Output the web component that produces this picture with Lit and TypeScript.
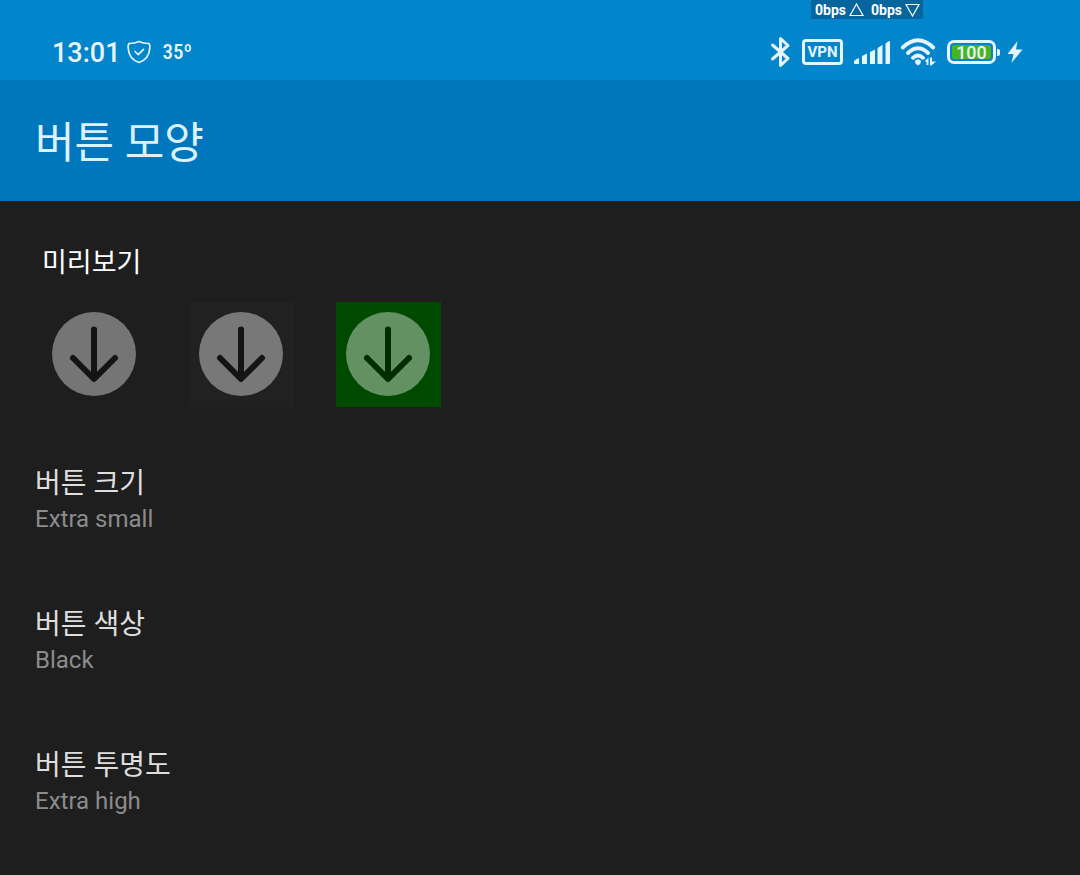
import { LitElement, html, css } from "lit";
import { customElement, property } from "lit/decorators.js";

const FONT = css`Roboto, "Noto Sans CJK KR", sans-serif`;

@customElement("status-bar")
class StatusBar extends LitElement {
  static styles = css`
    :host {
      display: block;
      height: 80px;
      background: #0285ca;
      color: #e6f4fd;
      font-family: ${FONT};
    }
    .speed {
      display: flex;
      align-items: center;
      gap: 3px;
      width: max-content;
      height: 19px;
      margin: 0 157px 0 auto;
      padding: 0 3px 0 4px;
      box-sizing: border-box;
      background: #05659c;
      color: #fff;
      font-size: 14px;
      line-height: 20px;
      font-weight: 700;
    }
    .down {
      margin-left: 4px;
    }
    .row {
      display: flex;
      justify-content: space-between;
      align-items: center;
      height: 48px;
      padding: 9px 56px 0 52px;
      box-sizing: content-box;
    }
    .group {
      display: flex;
      align-items: center;
    }
    .clock {
      font-size: 27px;
      font-weight: 500;
      line-height: 32px;
      padding-top: 2px;
    }
    .shield {
      margin: 0 12px 0 6px;
    }
    .temp {
      font-family: "Roboto Condensed", "Liberation Sans Narrow", Roboto, sans-serif;
      font-size: 21px;
      font-weight: 500;
      line-height: 32px;
    }
    .vpn {
      width: 41px;
      height: 26px;
      margin: 0 11px;
      box-sizing: border-box;
      border: 3px solid;
      border-radius: 4px;
      font-size: 15px;
      line-height: 21px;
      font-weight: 700;
      text-align: center;
    }
    .wifi {
      margin: 0 10px;
    }
    .battery {
      width: 49px;
      height: 24px;
      box-sizing: border-box;
      border: 3px solid;
      border-radius: 7px;
      padding: 2px;
      font-size: 18px;
      line-height: 15px;
      text-align: center;
      font-weight: 500;
    }
    .charge {
      height: 14px;
      background: #48b51f;
      border-radius: 2px;
    }
    .cap {
      width: 3px;
      height: 7px;
      margin: 0 6px 0 1px;
      border-radius: 0 2px 2px 0;
      background: currentColor;
    }
    svg {
      display: block;
      fill: none;
      stroke: currentColor;
    }
    .solid {
      fill: currentColor;
      stroke: none;
    }
  `;

  render() {
    return html`
      <div class="speed">
        <span>0bps</span>
        <svg width="15" height="14" viewBox="0 0 15 14" stroke-width="1.2"><path d="M7.5 1 14 12.500H1Z" /></svg>
        <span class="down">0bps</span>
        <svg width="15" height="14" viewBox="0 0 15 14" stroke-width="1.2"><path d="M7.5 13 14 1.500H1Z" /></svg>
      </div>
      <div class="row">
        <div class="group">
          <span class="clock">13:01</span>
          <svg class="shield" width="24" height="24" viewBox="0 0 24 24" stroke-width="1.7" stroke-linejoin="round" stroke-linecap="round">
            <path d="M12 1.5C9 3 5.500 3.500 2.200 3.500 1.300 4 1 5 1.200 8 1.500 15 5 20 12 22.500 19 20 22.500 15 22.800 8 23 5 22.700 4 21.800 3.500 18.500 3.500 15 3 12 1.500Z" />
            <path d="M8 11.500 11.300 14.700 16.500 9.300" />
          </svg>
          <span class="temp">35º</span>
        </div>
        <div class="group">
          <svg width="21" height="32" viewBox="0 0 21 32" stroke-width="3" stroke-linejoin="round" stroke-linecap="round">
            <path d="M2.500 9 18 22.500 10.500 29.500V2.500L18 9.500 2.500 23" />
          </svg>
          <div class="vpn">VPN</div>
          <svg class="solid" width="36" height="25" viewBox="0 0 36 25">
            <path d="M0 21.500Q0 20 5 18V24H1Q0 24 0 23ZM8 16 13 13.500V24H8ZM16 12 21 9.500V24H16ZM23.500 8 28.500 5V24H23.500ZM31.500 3.500 34.500 1.200Q36 0.500 36 2V23Q36 24 35 24H31.500Z" />
          </svg>
          <svg class="wifi" width="37" height="30" viewBox="0 0 37 30" stroke-width="3.8" stroke-linecap="round">
            <path d="M2.800 10.500Q18 -3.800 33.200 10.500M8 16Q18 6.500 28 16M13 20.800Q18 16.200 23 20.800" />
            <path class="solid" d="M14.800 24Q18 20.500 21.200 24 21 27 18 28.500 15 27 14.800 24ZM24.500 24.500 28.500 20.500V28H26.500V24.500ZM30 20.500H32V24.500H36L31.500 28.500H30Z" />
          </svg>
          <div class="battery"><div class="charge">100</div></div>
          <div class="cap"></div>
          <svg class="solid" width="18" height="24" viewBox="0 0 18 24">
            <path d="M11.500 1 1.500 14H7.500L5.500 23 16.500 9.500H10Z" />
          </svg>
        </div>
      </div>
    `;
  }
}

@customElement("button-preview")
class ButtonPreview extends LitElement {
  @property({ reflect: true }) tone = "plain";

  static styles = css`
    :host {
      display: block;
      padding: 10px 11px 11px 10px;
      color: #141414;
      --disc: #757575;
    }
    :host([tone="dark"]) {
      background: #212121;
      --disc: #787878;
    }
    :host([tone="green"]) {
      background: #004a00;
      color: #002d00;
      --disc: #639163;
    }
    svg {
      display: block;
      width: 84px;
      height: 84px;
    }
    .disc {
      fill: var(--disc);
    }
    .arrow {
      fill: none;
      stroke: currentColor;
      stroke-width: 6;
      stroke-linecap: round;
      stroke-linejoin: round;
    }
  `;

  render() {
    return html`
      <svg viewBox="0 0 84 84" aria-hidden="true">
        <circle class="disc" cx="42" cy="42" r="42" />
        <path class="arrow" d="M42 17.500V66M21 46 42 67 63 46" />
      </svg>
    `;
  }
}

@customElement("app-root")
class AppRoot extends LitElement {
  static styles = css`
    :host {
      display: block;
      min-height: 100vh;
      background: #1e1e1e;
      font-family: ${FONT};
    }
    .header {
      display: flex;
      align-items: center;
      height: 121px;
      padding: 4px 35px 0;
      box-sizing: border-box;
      background: #0076bd;
    }
    .title {
      margin: 0;
      color: #dcf1fe;
      font-size: 43px;
      line-height: 56px;
      font-weight: 400;
    }
    .label {
      margin: 0;
      padding: 43px 42px 19px;
      color: #fff;
      font-size: 27px;
      line-height: 39px;
      font-weight: 400;
    }
    .previews {
      display: flex;
      gap: 42px;
      padding: 0 42px;
    }
    .settings {
      margin: 0;
      padding: 22px 0 0;
      list-style: none;
    }
    .item {
      display: flex;
      flex-direction: column;
      justify-content: center;
      width: 100%;
      height: 141px;
      padding: 0 35px;
      border: 0;
      background: none;
      font-family: inherit;
      text-align: left;
      cursor: pointer;
    }
    .name {
      color: #dedede;
      font-size: 28px;
      line-height: 40px;
    }
    .value {
      padding-bottom: 2px;
      color: #8c8c8c;
      font-size: 24px;
      line-height: 30px;
    }
  `;

  private settings = [
    { name: "버튼 크기", value: "Extra small" },
    { name: "버튼 색상", value: "Black" },
    { name: "버튼 투명도", value: "Extra high" },
  ];

  render() {
    return html`
      <status-bar></status-bar>
      <header class="header"><h1 class="title">버튼 모양</h1></header>
      <main>
        <h2 class="label">미리보기</h2>
        <div class="previews">
          <button-preview></button-preview>
          <button-preview tone="dark"></button-preview>
          <button-preview tone="green"></button-preview>
        </div>
        <ul class="settings">
          ${this.settings.map(
            (s) => html`
              <li>
                <button class="item" type="button">
                  <span class="name">${s.name}</span>
                  <span class="value">${s.value}</span>
                </button>
              </li>
            `
          )}
        </ul>
      </main>
    `;
  }
}
